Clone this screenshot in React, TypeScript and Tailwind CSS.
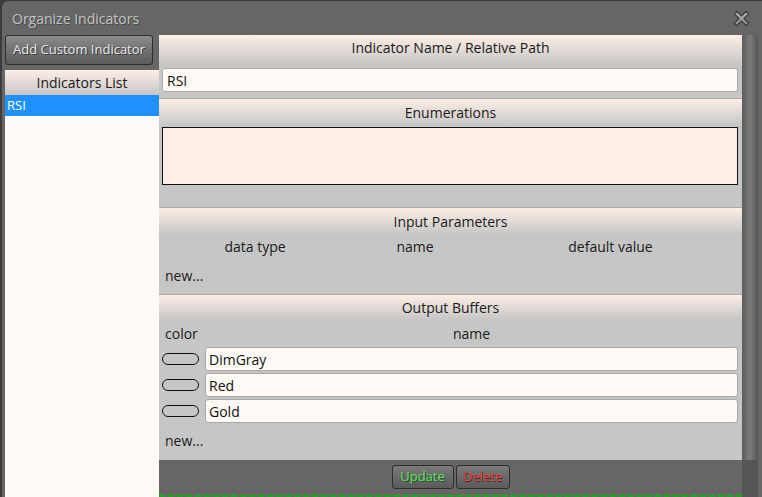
import React from 'react';

const font = { fontFamily: '"Open Sans", "Noto Sans", sans-serif' };

function SectionHeader({ title, h }: { title: string; h: string }) {
  return (
    <div
      className={`${h} flex items-center justify-center border-t border-[#b3aaa7] bg-gradient-to-b from-[#fdeee6] to-[#c6c6c6] text-[14px] text-[#1a1a1a]`}
    >
      {title}
    </div>
  );
}

function CloseIcon() {
  return (
    <svg width="17" height="17" viewBox="0 0 18 18">
      <defs>
        <linearGradient id="xg" x1="0" y1="0" x2="0" y2="1">
          <stop offset="0" stopColor="#bdbdbd" />
          <stop offset="1" stopColor="#8a8a8a" />
        </linearGradient>
      </defs>
      <path
        d="M1.5 4 L4 1.5 L9 6.5 L14 1.5 L16.5 4 L11.5 9 L16.5 14 L14 16.5 L9 11.5 L4 16.5 L1.5 14 L6.5 9 Z"
        fill="url(#xg)"
        stroke="#3a3a3a"
        strokeWidth="1.2"
        strokeLinejoin="round"
      />
    </svg>
  );
}

const buffers = ['DimGray', 'Red', 'Gold'];

export default function App() {
  return (
    <div className="w-[762px] h-[497px] overflow-hidden bg-[#3c3c3c]" style={font}>
      <div className="ml-[2px] mt-[1px] h-[496px] bg-[#666666] rounded-tl-[6px] flex flex-col">
        {/* title bar */}
        <div className="h-[34px] flex items-center justify-between pl-[10px] pr-[12px]">
          <span className="text-[14px] text-[#c4c4c4] [text-shadow:1px_1px_0_#4a4a4a]">
            Organize Indicators
          </span>
          <CloseIcon />
        </div>

        <div className="flex flex-1 min-h-0">
          {/* left column */}
          <div className="w-[157px] pl-[3px] flex flex-col">
            <button className="w-[148px] h-[30px] rounded-[3px] border border-[#2e2e2e] bg-gradient-to-b from-[#8c8c8c] to-[#5a5a5a] text-[13px] text-[#e8e8e8] [text-shadow:1px_1px_0_#3a3a3a]">
              Add Custom Indicator
            </button>
            <div className="mt-[5px] flex-1 flex flex-col bg-[#fffaf5]">
              <div className="h-[25px] flex items-center justify-center bg-gradient-to-b from-[#fdeee6] to-[#c6c6c6] text-[14px] text-[#1a1a1a]">
                Indicators List
              </div>
              <div className="h-[21px] flex items-center pl-[2px] bg-[#1e90ff] text-[13px] text-white">
                RSI
              </div>
            </div>
          </div>

          {/* right content */}
          <div className="flex-1 flex flex-col">
            <div className="flex flex-1">
              <div className="w-[583px] flex flex-col bg-[#c6c6c6]">
                <div className="h-[30px] pb-[6px] flex items-center justify-center bg-gradient-to-b from-[#fdeee6] to-[#c6c6c6] text-[14px] text-[#1a1a1a]">
                  Indicator Name / Relative Path
                </div>
                <div className="mt-[3px] ml-[3px] mr-[4px] h-[24px] rounded-[3px] border border-[#a8a8a8] bg-[#fffaf5] flex items-center pl-[4px] text-[14px] text-[#111]">
                  RSI
                </div>
                <div className="h-[6px]" />
                <SectionHeader title="Enumerations" h="h-[28px]" />
                <div className="mt-[1px] ml-[3px] mr-[4px] h-[58px] border border-[#111] bg-[#fdeee6]" />
                <div className="h-[22px]" />
                <SectionHeader title="Input Parameters" h="h-[28px]" />
                <div className="h-[22px] flex items-center text-[14px] text-[#1a1a1a]">
                  <div className="w-[192px] text-center">data type</div>
                  <div className="w-[128px] text-center">name</div>
                  <div className="flex-1 text-center">default value</div>
                </div>
                <div className="h-[36px] flex items-center pl-[6px] text-[14px] text-[#1a1a1a]">new...</div>
                <div className="h-[1px]" />
                <SectionHeader title="Output Buffers" h="h-[26px]" />
                <div className="h-[26px] flex items-center text-[14px] text-[#1a1a1a]">
                  <div className="w-[46px] pl-[6px]">color</div>
                  <div className="flex-1 text-center pr-[4px]">name</div>
                </div>
                <div className="mt-[1px] flex flex-col gap-[2px]">
                  {buffers.map((b) => (
                    <div key={b} className="flex items-center h-[24px]">
                      <div className="ml-[3px] w-[37px] h-[12px] rounded-[6px] border border-[#111] bg-[#c6c6c6]" />
                      <div className="ml-[6px] mr-[4px] flex-1 h-[24px] rounded-[3px] border border-[#a8a8a8] bg-[#fffaf5] flex items-center pl-[3px] text-[14px] text-[#111]">
                        {b}
                      </div>
                    </div>
                  ))}
                </div>
                <div className="h-[34px] flex items-center pl-[6px] text-[14px] text-[#1a1a1a]">new...</div>
              </div>
              {/* scrollbar */}
              <div className="w-[16px] bg-gradient-to-r from-[#5c5c5c] via-[#7c7c7c] to-[#555555] rounded-t-[3px]" />
            </div>

            {/* footer */}
            <div className="h-[37px] flex">
              <div className="w-[583px] flex flex-col">
                <div className="flex-1 flex items-start justify-center pt-[5px] gap-[2px]">
                  <button className="w-[62px] h-[24px] rounded-[3px] border border-[#2e2e2e] bg-gradient-to-b from-[#7a7a7a] to-[#5a5a5a] text-[13px] text-[#62e05e] [text-shadow:1px_1px_0_#2f4a2f]">
                    Update
                  </button>
                  <button className="w-[54px] h-[24px] rounded-[3px] border border-[#2e2e2e] bg-gradient-to-b from-[#7a7a7a] to-[#5a5a5a] text-[13px] text-[#e04848] [text-shadow:1px_1px_0_#4a2a2a]">
                    Delete
                  </button>
                </div>
                <div className="h-[3px] border-t-[3px] border-dashed border-[#2e9a2e]" />
              </div>
              <div className="w-[16px] bg-[#555555]" />
            </div>
          </div>
        </div>
      </div>
    </div>
  );
}
